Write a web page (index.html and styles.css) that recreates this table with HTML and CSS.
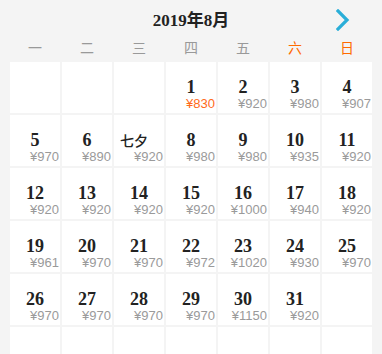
FILE: index.html
```html
<!DOCTYPE html>
<html lang="zh">
<head>
<meta charset="utf-8">
<link rel="stylesheet" href="styles.css">
</head>
<body>
<div class="cal">
  <div class="head">
    <div class="title">2019年8月</div>
    <span class="next"><svg width="14" height="22" viewBox="0 0 14 22"><path d="M2 2 L11 11 L2 20" fill="none" stroke="#2aaed8" stroke-width="3.2" stroke-linecap="square"/></svg></span>
  </div>
  <div class="week">
    <span>一</span><span>二</span><span>三</span><span>四</span><span>五</span><span class="we">六</span><span class="we">日</span>
  </div>
  <div class="grid">
    <div class="cell"></div><div class="cell"></div><div class="cell"></div>
    <div class="cell"><div class="num">1</div><div class="price low">¥830</div></div>
    <div class="cell"><div class="num">2</div><div class="price">¥920</div></div>
    <div class="cell"><div class="num">3</div><div class="price">¥980</div></div>
    <div class="cell"><div class="num">4</div><div class="price">¥907</div></div>

    <div class="cell"><div class="num">5</div><div class="price">¥970</div></div>
    <div class="cell"><div class="num">6</div><div class="price">¥890</div></div>
    <div class="cell"><div class="num"><span class="fest">七夕</span></div><div class="price">¥920</div></div>
    <div class="cell"><div class="num">8</div><div class="price">¥980</div></div>
    <div class="cell"><div class="num">9</div><div class="price">¥980</div></div>
    <div class="cell"><div class="num">10</div><div class="price">¥935</div></div>
    <div class="cell"><div class="num">11</div><div class="price">¥920</div></div>

    <div class="cell"><div class="num">12</div><div class="price">¥920</div></div>
    <div class="cell"><div class="num">13</div><div class="price">¥920</div></div>
    <div class="cell"><div class="num">14</div><div class="price">¥920</div></div>
    <div class="cell"><div class="num">15</div><div class="price">¥920</div></div>
    <div class="cell"><div class="num">16</div><div class="price">¥1000</div></div>
    <div class="cell"><div class="num">17</div><div class="price">¥940</div></div>
    <div class="cell"><div class="num">18</div><div class="price">¥920</div></div>

    <div class="cell"><div class="num">19</div><div class="price">¥961</div></div>
    <div class="cell"><div class="num">20</div><div class="price">¥970</div></div>
    <div class="cell"><div class="num">21</div><div class="price">¥970</div></div>
    <div class="cell"><div class="num">22</div><div class="price">¥972</div></div>
    <div class="cell"><div class="num">23</div><div class="price">¥1020</div></div>
    <div class="cell"><div class="num">24</div><div class="price">¥930</div></div>
    <div class="cell"><div class="num">25</div><div class="price">¥970</div></div>

    <div class="cell"><div class="num">26</div><div class="price">¥970</div></div>
    <div class="cell"><div class="num">27</div><div class="price">¥970</div></div>
    <div class="cell"><div class="num">28</div><div class="price">¥970</div></div>
    <div class="cell"><div class="num">29</div><div class="price">¥970</div></div>
    <div class="cell"><div class="num">30</div><div class="price">¥1150</div></div>
    <div class="cell"><div class="num">31</div><div class="price">¥920</div></div>
    <div class="cell"></div>

    <div class="cell"></div><div class="cell"></div><div class="cell"></div><div class="cell"></div><div class="cell"></div><div class="cell"></div><div class="cell"></div>
  </div>
</div>
</body>
</html>
```
FILE: styles.css
```css
html, body {
  margin: 0;
  padding: 0;
  background: #f4f4f4;
  overflow: hidden;
}
.cal {
  width: 382px;
  height: 354px;
  overflow: hidden;
}
.head {
  position: relative;
  height: 36px;
  padding-top: 5px;
  box-sizing: border-box;
  text-align: center;
}
.title {
  font-family: "Liberation Serif", "Noto Sans CJK SC", serif;
  font-weight: bold;
  font-size: 17px;
  line-height: 31px;
  color: #222;
}
.next {
  position: absolute;
  left: 336px;
  top: 9px;
  width: 14px;
  height: 22px;
}
.next svg { display: block; }
.week {
  display: grid;
  grid-template-columns: repeat(7, 50px);
  column-gap: 2px;
  padding: 0 10px;
  height: 22px;
  margin-bottom: 4px;
  font-family: "Noto Sans CJK SC", sans-serif;
  font-size: 14px;
  line-height: 22px;
  color: #999;
  text-align: center;
}
.week .we { color: #ff6a00; }
.grid {
  display: grid;
  grid-template-columns: repeat(7, 50px);
  grid-auto-rows: 51px;
  gap: 2px;
  padding: 0 10px;
}
.cell {
  background: #fff;
  padding-top: 15px;
  box-sizing: border-box;
}
.num {
  font-family: "Liberation Serif", "Noto Sans CJK SC", serif;
  font-weight: bold;
  font-size: 18px;
  line-height: 20px;
  height: 20px;
  color: #222;
  text-align: center;
}
.fest {
  font-family: "Noto Sans CJK SC", sans-serif;
  font-weight: 500;
  font-size: 14px;
  margin-right: 10px;
}
.price {
  font-family: "Liberation Sans", "Noto Sans CJK SC", sans-serif;
  font-size: 13px;
  line-height: 14px;
  color: #9a9a9a;
  text-align: right;
  padding-right: 1px;
}
.price.low { color: #ff6a1a; }
```
